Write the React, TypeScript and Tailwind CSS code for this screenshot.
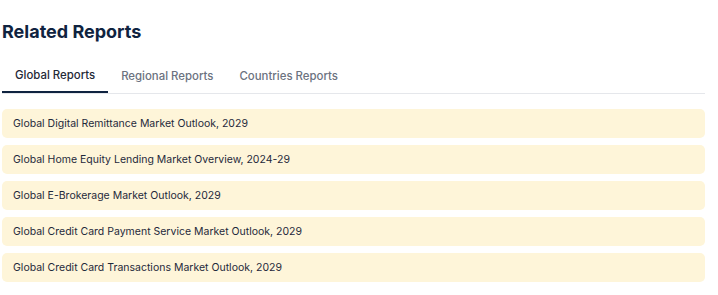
export default function App() {
  const tabs = ["Global Reports", "Regional Reports", "Countries Reports"];
  const reports = [
    "Global Digital Remittance Market Outlook, 2029",
    "Global Home Equity Lending Market Overview, 2024-29",
    "Global E-Brokerage Market Outlook, 2029",
    "Global Credit Card Payment Service Market Outlook, 2029",
    "Global Credit Card Transactions Market Outlook, 2029",
  ];

  return (
    <div className="bg-white w-[718px] h-[295px] pl-[2px] font-['Inter',sans-serif]">
      <div className="w-[703px]">
        <h2 className="pt-[20px] text-[18px] leading-[24px] font-bold text-[#0f2340]">
          Related Reports
        </h2>
        {/* Tabs */}
        <div className="mt-[16px] flex border-b border-[#e5e7eb]">
          {tabs.map((t, i) => (
            <div
              key={t}
              className={
                i === 0
                  ? "px-[13px] h-[33px] flex items-center text-[11.4px] font-medium text-[#1f2937] border-b-2 border-[#0f2340] -mb-px"
                  : "px-[13px] h-[33px] flex items-center text-[11.4px] font-medium text-[#6b7280]"
              }
            >
              {t}
            </div>
          ))}
        </div>
        {/* Report list */}
        <div className="mt-[15px] flex flex-col gap-[7px]">
          {reports.map((r) => (
            <div
              key={r}
              className="h-[29px] rounded-[5px] bg-[#fef5d9] px-[11px] flex items-center text-[10.5px] text-[#1e293b]"
            >
              {r}
            </div>
          ))}
        </div>
      </div>
    </div>
  );
}
